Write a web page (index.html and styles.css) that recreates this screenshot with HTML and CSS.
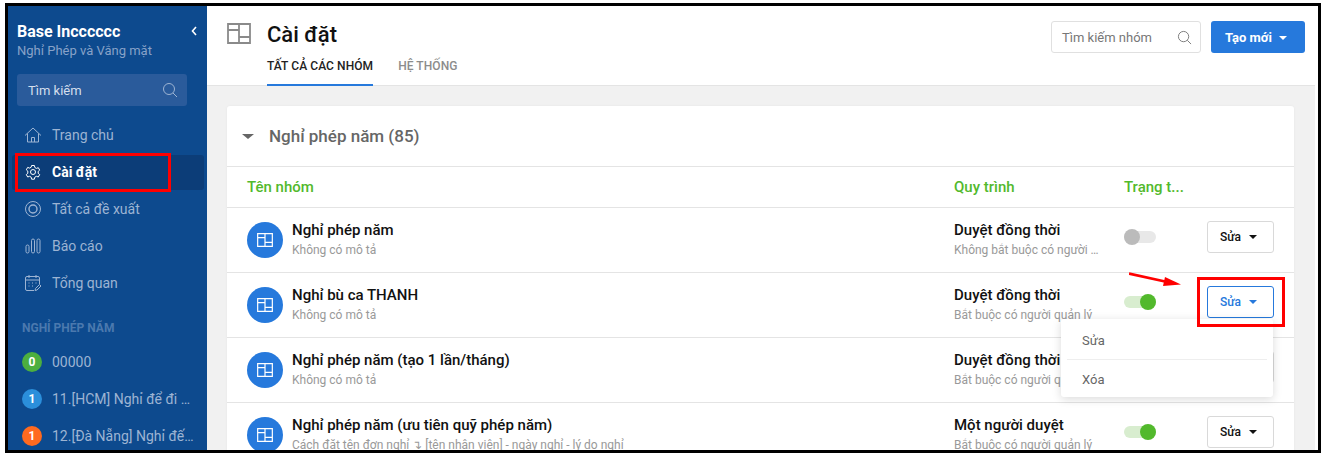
FILE: index.html
```html
<!DOCTYPE html>
<html lang="vi">
<head>
    <meta charset="UTF-8">
    <title>Cài đặt</title>
    <link rel="stylesheet" href="styles.css">
</head>
<body>
    <svg class="defs" width="0" height="0">
        <symbol id="i-layout" viewBox="0 0 24 21">
            <path d="M1 1h22v19H1zM12 1v19M1 7h11M12 14h11" fill="none" stroke="currentColor" stroke-width="1.8"/>
        </symbol>
    </svg>
    <div class="frame">
        <aside class="sidebar">
            <div class="brand">
                <div class="brand-name">Base Incccccc <span class="collapse">
                    <svg width="6" height="10" viewBox="0 0 6 10"><path d="M5 1L1.500 5 5 9" fill="none" stroke="#fff" stroke-width="1.600"/></svg>
                </span></div>
                <div class="brand-sub">Nghỉ Phép và Vắng mặt</div>
            </div>
            <div class="side-search">
                <span>Tìm kiếm</span>
                <svg width="16" height="16" viewBox="0 0 16 16"><circle cx="7" cy="7" r="5.500" fill="none" stroke="currentColor"/><path d="M11 11l4 4" stroke="currentColor"/></svg>
            </div>
            <nav class="nav">
                <a class="nav-item">
                    <svg width="18" height="18" viewBox="0 0 18 18" fill="none" stroke="currentColor"><path d="M1 9.500L9 2l8 7.500M3.500 7.500V16h11V7.500M7.500 16v-4.500h3V16"/></svg>
                    Trang chủ
                </a>
                <a class="nav-item active">
                    <svg width="18" height="18" viewBox="0 0 18 18" fill="none" stroke="currentColor"><circle cx="9" cy="9" r="2.500"/><path d="M7.600 2.500h2.800l.4 2 1.600.9 1.900-.7 1.400 2.400-1.500 1.300v1.900l1.500 1.300-1.400 2.400-1.900-.7-1.600.9-.4 2H7.600l-.4-2-1.600-.9-1.900.7-1.400-2.400 1.500-1.300V8.100L2.300 6.800l1.400-2.400 1.900.7 1.600-.9z"/></svg>
                    Cài đặt
                </a>
                <a class="nav-item">
                    <svg width="18" height="18" viewBox="0 0 18 18" fill="none" stroke="currentColor"><circle cx="9" cy="9" r="7.500"/><circle cx="9" cy="9" r="4" stroke-width="1.400"/></svg>
                    Tất cả đề xuất
                </a>
                <a class="nav-item">
                    <svg width="18" height="18" viewBox="0 0 18 18" fill="none" stroke="currentColor"><rect x="2" y="8" width="3" height="8" rx="1.500"/><rect x="7.500" y="2" width="3" height="14" rx="1.500"/><rect x="13" y="2" width="3" height="14" rx="1.500"/></svg>
                    Báo cáo
                </a>
                <a class="nav-item">
                    <svg width="18" height="18" viewBox="0 0 18 18" fill="none" stroke="currentColor"><path d="M10 16.500H3A1.500 1.500 0 0 1 1.500 15V4A1.500 1.500 0 0 1 3 2.500h11A1.500 1.500 0 0 1 15.500 4v6M1.500 6h14M5 1v3M12 1v3M4.500 9h1M8 9h1M11.500 9h1M4.500 12h1M8 12h1M11 16.500l.5-2 4-4 1.500 1.500-4 4z"/></svg>
                    Tổng quan
                </a>
            </nav>
            <div class="side-label">NGHỈ PHÉP NĂM</div>
            <div class="side-list">
                <div class="side-row"><span class="badge green">0</span><span class="side-text">00000</span></div>
                <div class="side-row"><span class="badge blue">1</span><span class="side-text">11.[HCM] Nghỉ để đi công tác</span></div>
                <div class="side-row"><span class="badge orange">1</span><span class="side-text">12.[Đà Nẵng] Nghỉ đến công tác</span></div>
            </div>
        </aside>

        <div class="content">
            <header class="topbar">
                <svg class="page-icon" width="24" height="21"><use href="#i-layout"/></svg>
                <div class="page-head">
                    <h1>Cài đặt</h1>
                    <div class="tabs">
                        <a class="tab current">TẤT CẢ CÁC NHÓM</a>
                        <a class="tab">HỆ THỐNG</a>
                    </div>
                </div>
                <div class="top-search">
                    <span>Tìm kiếm nhóm</span>
                    <svg width="15" height="15" viewBox="0 0 16 16"><circle cx="7" cy="7" r="5.500" fill="none" stroke="#777"/><path d="M11 11l4 4" stroke="#777"/></svg>
                </div>
                <button class="btn-new">Tạo mới <i class="caret"></i></button>
            </header>

            <main class="main">
                <section class="card">
                    <div class="card-head"><i class="caret big"></i>Nghỉ phép năm (85)</div>
                    <div class="row head-row">
                        <div>Tên nhóm</div>
                        <div>Quy trình</div>
                        <div>Trạng t...</div>
                    </div>
                    <div class="row">
                        <div class="group">
                            <span class="group-icon"><svg width="16" height="14"><use href="#i-layout"/></svg></span>
                            <div class="cell"><div class="title">Nghỉ phép năm</div><div class="sub">Không có mô tả</div></div>
                        </div>
                        <div class="cell"><div class="title">Duyệt đồng thời</div><div class="sub">Không bắt buộc có người quản lý</div></div>
                        <div class="switch off"><i></i></div>
                        <button class="btn-edit">Sửa <i class="caret"></i></button>
                    </div>
                    <div class="row">
                        <div class="group">
                            <span class="group-icon"><svg width="16" height="14"><use href="#i-layout"/></svg></span>
                            <div class="cell"><div class="title">Nghỉ bù ca THANH</div><div class="sub">Không có mô tả</div></div>
                        </div>
                        <div class="cell"><div class="title">Duyệt đồng thời</div><div class="sub">Bắt buộc có người quản lý</div></div>
                        <div class="switch"><i></i></div>
                        <button class="btn-edit open">Sửa <i class="caret"></i></button>
                    </div>
                    <div class="row">
                        <div class="group">
                            <span class="group-icon"><svg width="16" height="14"><use href="#i-layout"/></svg></span>
                            <div class="cell"><div class="title">Nghỉ phép năm (tạo 1 lần/tháng)</div><div class="sub">Không có mô tả</div></div>
                        </div>
                        <div class="cell"><div class="title">Duyệt đồng thời</div><div class="sub">Bắt buộc có người quản lý</div></div>
                        <div class="switch"><i></i></div>
                        <button class="btn-edit">Sửa <i class="caret"></i></button>
                    </div>
                    <div class="row">
                        <div class="group">
                            <span class="group-icon"><svg width="16" height="14"><use href="#i-layout"/></svg></span>
                            <div class="cell"><div class="title">Nghỉ phép năm (ưu tiên quỹ phép năm)</div><div class="sub">Cách đặt tên đơn nghỉ ↴ [tên nhân viên] - ngày nghỉ - lý do nghỉ</div></div>
                        </div>
                        <div class="cell"><div class="title">Một người duyệt</div><div class="sub">Bắt buộc có người quản lý</div></div>
                        <div class="switch"><i></i></div>
                        <button class="btn-edit">Sửa <i class="caret"></i></button>
                    </div>
                </section>
            </main>
        </div>

        <div class="menu">
            <div class="menu-item">Sửa</div>
            <div class="menu-item">Xóa</div>
        </div>

        <div class="mark mark-nav"></div>
        <div class="mark mark-btn"></div>
        <svg class="arrow" width="54" height="16" viewBox="0 0 54 16">
            <path d="M0 1.500L36 9.500" stroke="#f00" stroke-width="2.800" fill="none"/>
            <path d="M52 12.500L36 5l-2 9z" fill="#f00"/>
        </svg>
    </div>
</body>
</html>
```

FILE: styles.css
```css
* {
    box-sizing: border-box;
}
body {
    margin: 0;
    background-color: #fff;
    font-family: Roboto, "Noto Sans", sans-serif;
    font-size: 14px;
    color: #111;
}
.defs {
    display: block;
}
.frame {
    position: relative;
    display: flex;
    width: 1316px;
    height: 450px;
    margin: 3px 0 0 5px;
    padding-right: 3px;
    border: 3px solid #000;
    background-color: #fff;
    overflow: hidden;
}

/* sidebar */
.sidebar {
    flex: 0 0 199px;
    background-color: #0d4a8e;
    color: #9db4d3;
    overflow: hidden;
}
.brand {
    padding: 15px 9px 0;
}
.brand-name {
    display: flex;
    justify-content: space-between;
    align-items: center;
    height: 20px;
    font-size: 16px;
    font-weight: 700;
    color: #fff;
}
.collapse {
    display: flex;
    margin-right: 1px;
}
.brand-sub {
    height: 20px;
    line-height: 20px;
    font-size: 13px;
    color: #87a2c8;
}
.side-search {
    display: flex;
    justify-content: space-between;
    align-items: center;
    width: 170px;
    height: 32px;
    margin: 13px 0 0 9px;
    padding: 0 9px 0 11px;
    border-radius: 3px;
    background-color: #2a5b9b;
    font-size: 13px;
    color: #d5dfed;
}
.side-search svg {
    color: #9db4d3;
}
.nav {
    display: flex;
    flex-direction: column;
    gap: 2px;
    margin: 12px 3px 0 4px;
}
.nav-item {
    display: flex;
    align-items: center;
    gap: 10px;
    height: 35px;
    padding: 0 0 2px 12px;
    border-radius: 3px;
}
.nav-item svg {
    flex: none;
    width: 18px;
}
.nav-item.active {
    background-color: #0c3d78;
    color: #fff;
    font-weight: 700;
}
.side-label {
    margin: 20px 0 0 14px;
    font-size: 12px;
    font-weight: 700;
    line-height: 14px;
    color: #4b79ae;
}
.side-list {
    margin-top: 8px;
}
.side-row {
    display: flex;
    align-items: center;
    gap: 10px;
    height: 37px;
    padding: 0 11px 0 14px;
}
.side-text {
    overflow: hidden;
    white-space: nowrap;
    text-overflow: ellipsis;
}
.badge {
    flex: none;
    width: 20px;
    height: 20px;
    border-radius: 50%;
    font-size: 12px;
    font-weight: 700;
    line-height: 20px;
    text-align: center;
    color: #fff;
}
.green { background-color: #4caf3f; }
.blue { background-color: #2b8fdb; }
.orange { background-color: #ff6a1f; }

/* top bar */
.content {
    display: flex;
    flex: 1;
    flex-direction: column;
    min-width: 0;
}
.topbar {
    display: flex;
    flex: none;
    height: 80px;
    padding: 15px 10px 0 20px;
    border-bottom: 1px solid #e4e4e4;
}
.page-icon {
    margin: 2px 16px 0 0;
    color: #8a8a8a;
}
.page-head {
    flex: 1;
}
h1 {
    margin: 1px 0 0;
    font-size: 22px;
    font-weight: 500;
    line-height: 26px;
    color: #111;
}
.tabs {
    display: flex;
    gap: 25px;
    margin-top: 4px;
}
.tab {
    height: 34px;
    padding-top: 7px;
    font-size: 12px;
    font-weight: 500;
    letter-spacing: 0.07px;
    color: #8c8c8c;
}
.tab.current {
    border-bottom: 2px solid #2679dc;
    color: #222;
}
.top-search {
    display: flex;
    justify-content: space-between;
    align-items: center;
    width: 150px;
    height: 32px;
    padding: 0 8px 0 10px;
    border: 1px solid #e0e0e0;
    border-radius: 3px;
    font-size: 13px;
    color: #777;
}
.btn-new {
    width: 94px;
    height: 32px;
    margin-left: 10px;
    padding: 0 4px 0 0;
    border: none;
    border-radius: 3px;
    background-color: #2679dc;
    font-family: inherit;
    font-size: 13px;
    font-weight: 700;
    color: #fff;
}
.caret {
    display: inline-block;
    width: 0;
    height: 0;
    margin-left: 4px;
    border-top: 4px solid currentColor;
    border-right: 4.500px solid transparent;
    border-left: 4.500px solid transparent;
    vertical-align: 2px;
}

/* list */
.main {
    flex: 1;
    padding: 20px 21px 0 20px;
    background-color: #f1f1f1;
    overflow: hidden;
}
.card {
    border-radius: 3px;
    background-color: #fff;
    box-shadow: 0 0 3px rgba(0,0,0,0.05);
}
.card-head {
    display: flex;
    align-items: center;
    height: 61px;
    padding-left: 15px;
    border-bottom: 1px solid #e4e4e4;
    font-size: 17px;
    font-weight: 500;
    color: #666;
}
.caret.big {
    margin: 0 15px 0 0;
    border-top-width: 5px;
    border-right-width: 6px;
    border-left-width: 6px;
}
.row {
    display: grid;
    grid-template-columns: 707px 170px 1fr auto;
    align-items: center;
    height: 65px;
    padding: 0 20px;
    border-bottom: 1px solid #e4e4e4;
    font-size: 15px;
}
.head-row {
    height: 41px;
    font-weight: 500;
    color: #52b92c;
}
.group {
    display: flex;
    align-items: center;
    gap: 9px;
    min-width: 0;
}
.group-icon {
    display: flex;
    flex: none;
    justify-content: center;
    align-items: center;
    width: 36px;
    height: 36px;
    border-radius: 50%;
    background-color: #2679dc;
    color: #fff;
}
.cell {
    min-width: 0;
    padding: 0 22px 1px 0;
}
.title {
    font-weight: 500;
    line-height: 19px;
    color: #111;
}
.sub {
    margin-top: 3.500px;
    overflow: hidden;
    font-size: 12px;
    line-height: 15px;
    white-space: nowrap;
    text-overflow: ellipsis;
    color: #999;
}
.switch {
    position: relative;
    width: 32px;
    height: 12px;
    margin-bottom: 6px;
    border-radius: 6px;
    background-color: #d8edcf;
}
.switch i {
    position: absolute;
    top: -2px;
    right: 0;
    width: 16px;
    height: 16px;
    border-radius: 50%;
    background-color: #52b92c;
}
.switch.off {
    background-color: #e8e8e8;
}
.switch.off i {
    right: auto;
    left: 0;
    background-color: #bbb;
}
.btn-edit {
    width: 67px;
    height: 32px;
    margin-bottom: 6px;
    padding: 0 4px 0 0;
    border: 1px solid #d9d9d9;
    border-radius: 3px;
    background-color: #fff;
    font-family: inherit;
    font-size: 12px;
    font-weight: 500;
    color: #111;
}
.btn-edit .caret {
    margin-left: 5px;
}
.btn-edit.open {
    border-color: #2679dc;
    color: #2679dc;
}

/* open dropdown */
.menu {
    position: absolute;
    top: 313px;
    left: 1053px;
    width: 212px;
    height: 78px;
    padding: 0 6px;
    border-radius: 3px;
    background-color: #fff;
    box-shadow: 0 2px 10px rgba(0,0,0,0.15);
    font-size: 13px;
    color: #666;
}
.menu-item {
    height: 40px;
    padding: 14px 0 0 15px;
    line-height: 16px;
}
.menu-item + .menu-item {
    height: 38px;
    padding-top: 12px;
    border-top: 1px solid #eee;
}

/* red marks drawn on the screenshot */
.mark {
    position: absolute;
    border: 3px solid #f00;
}
.mark-nav {
    top: 147px;
    left: 7px;
    width: 156px;
    height: 39px;
}
.mark-btn {
    top: 271px;
    left: 1189px;
    width: 88px;
    height: 50px;
}
.arrow {
    position: absolute;
    top: 266px;
    left: 1121px;
}
```
